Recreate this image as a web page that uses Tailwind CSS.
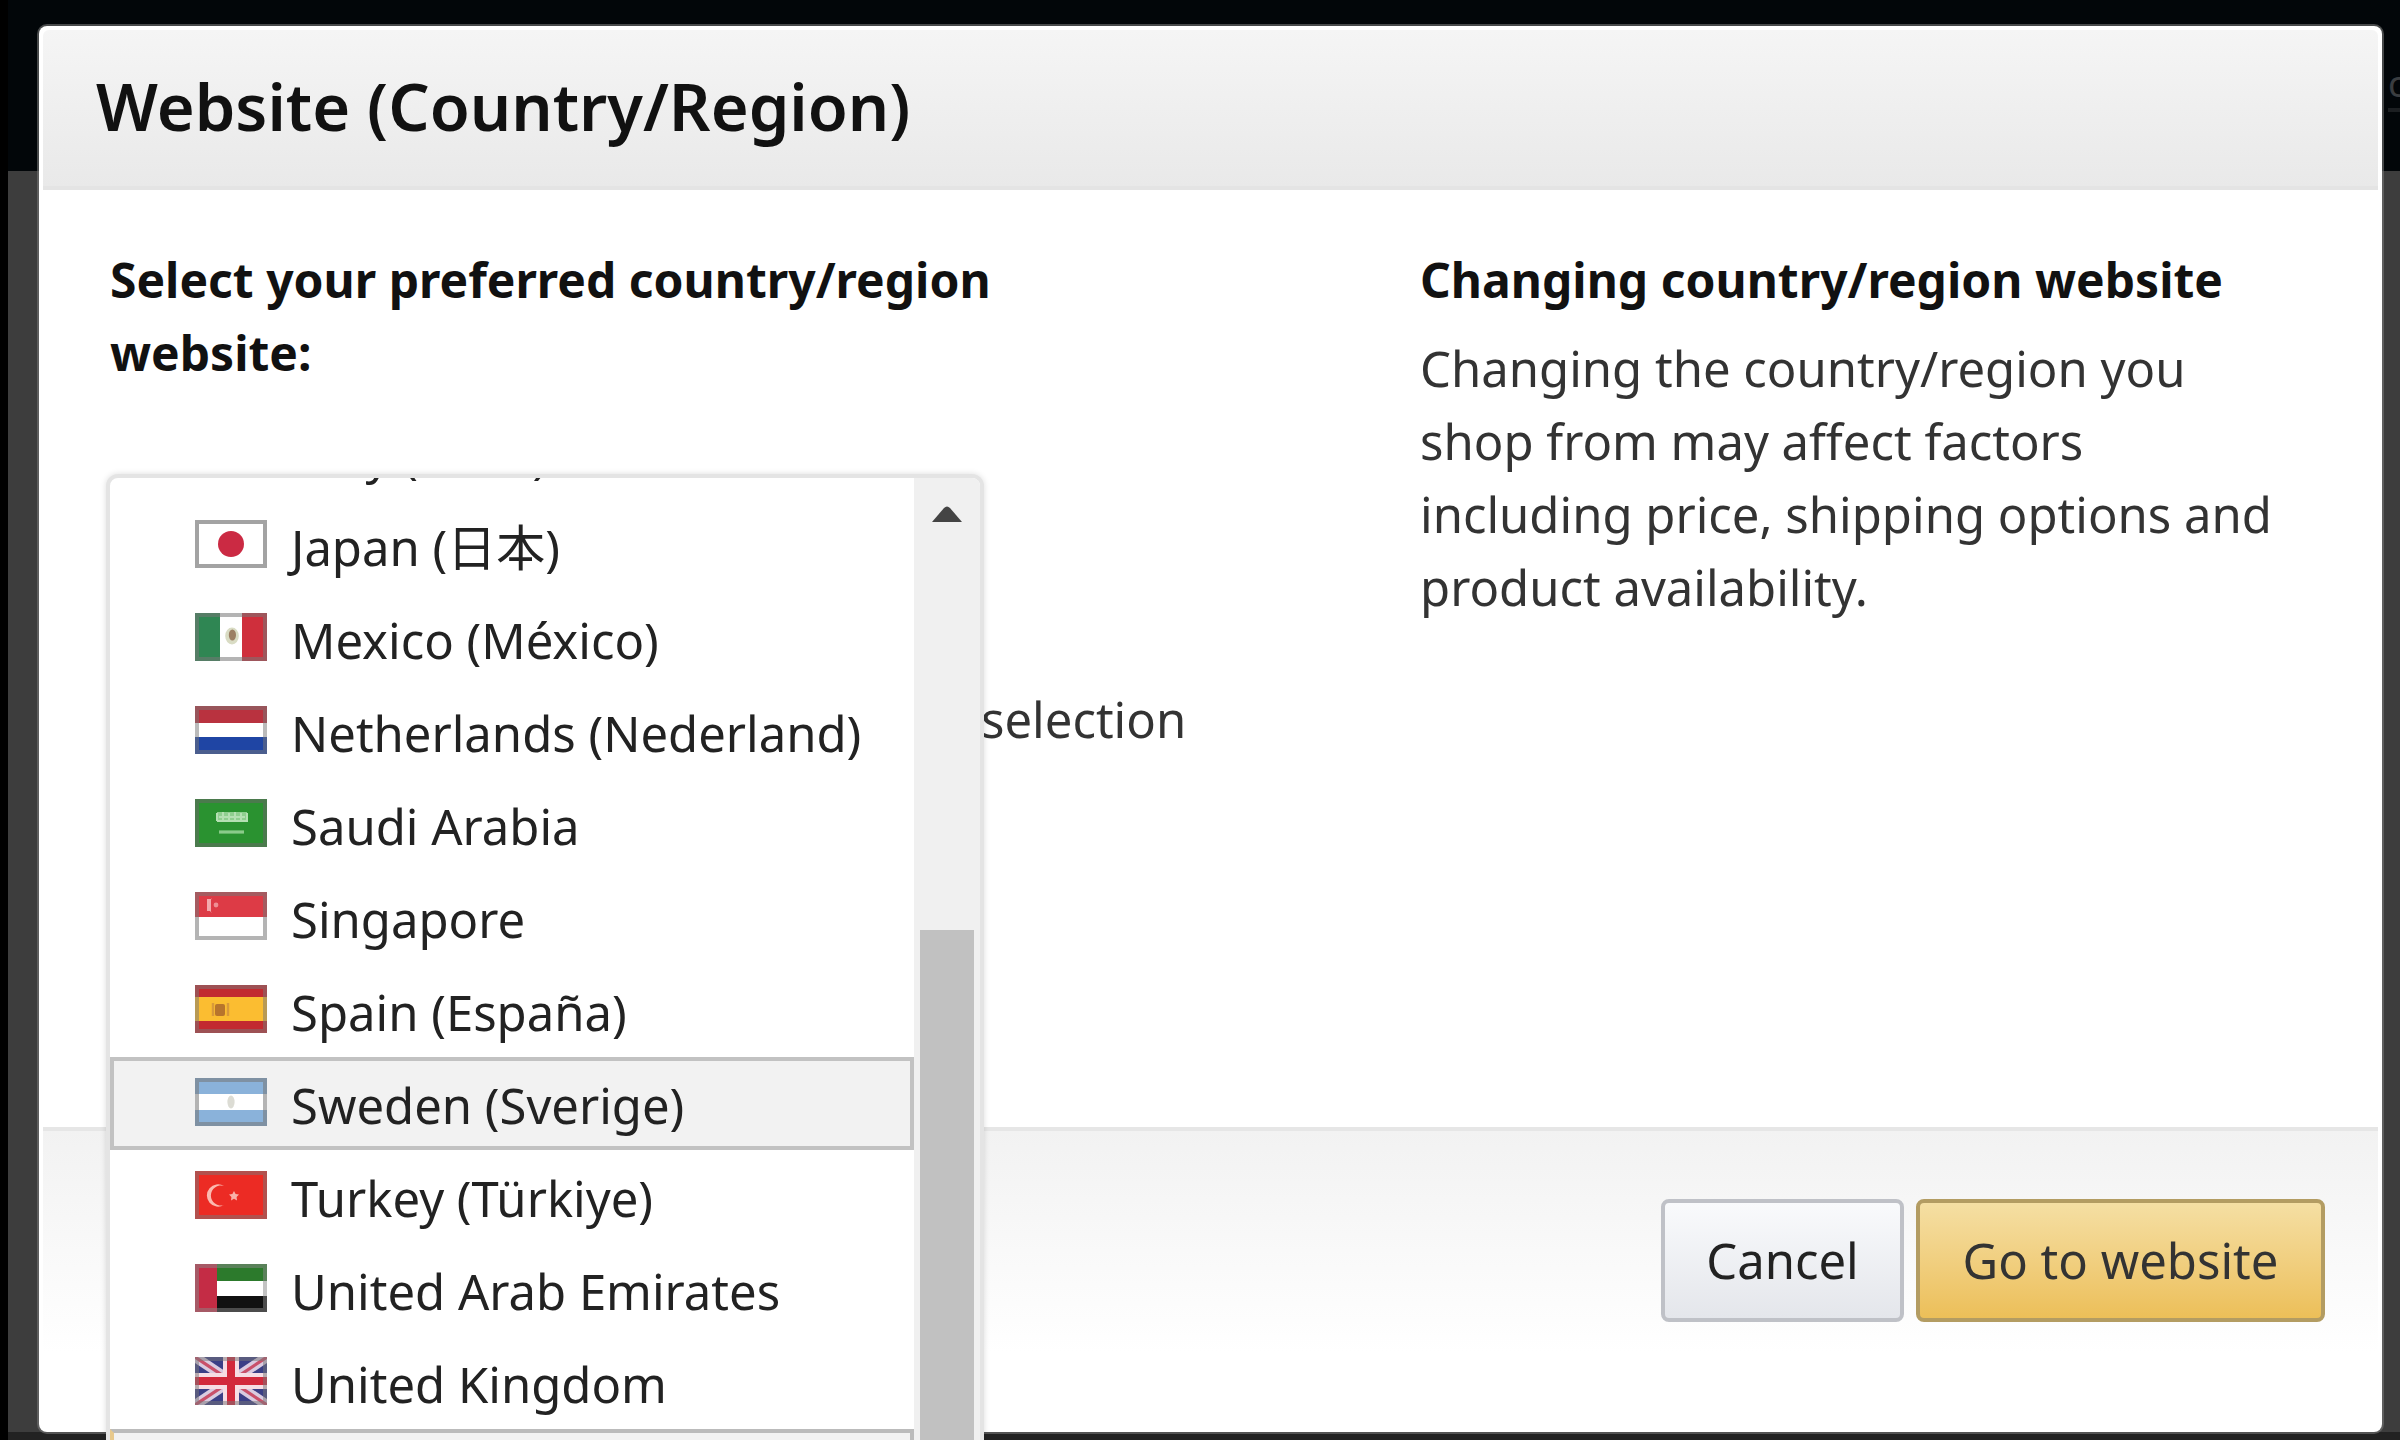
<!DOCTYPE html>
<html lang="en">

<head>
    <meta charset="UTF-8">
    <meta name="viewport" content="width=device-width, initial-scale=1.0">
    <title>Website (Country/Region)</title>
    <script src="https://cdn.jsdelivr.net/npm/@tailwindcss/browser@4"></script>
</head>

<body class="h-screen overflow-hidden bg-[#3d3d3d] font-['Noto_Sans','Noto_Sans_CJK_JP',sans-serif] text-[49px] leading-[73px] text-[#333]">

    <!-- Dimmed page behind the dialog -->
    <div class="absolute inset-0 flex flex-col justify-between border-l-8 border-black">
        <div class="flex h-[171px] justify-end overflow-hidden bg-[#020609] pt-14">
            <a href="#" class="h-14 w-3 overflow-hidden border-b-4 border-[#1c1f22] text-[36px] leading-14 text-[#3a3d40]">c</a>
        </div>
        <div class="h-2 bg-[#222]"></div>
    </div>

    <!-- Dialog -->
    <div role="dialog" aria-labelledby="dialog-title"
        class="relative mt-[26px] mr-[18px] ml-[39px] flex h-[calc(100vh-34px)] flex-col rounded-lg bg-white p-1 shadow-[0_0_0_2px_#77777799]">
        <header class="flex h-[160px] items-center rounded-t-md border-b-4 border-[#e4e4e4] bg-linear-to-b from-[#f5f5f5] to-[#e9e9e9] px-[53px] pb-1">
            <h1 id="dialog-title" class="text-[65px] leading-[84px] font-semibold text-[#111]">Website (Country/Region)</h1>
        </header>

        <main class="flex flex-1 justify-between pt-[53px] pr-[82px] pl-[67px]">
            <section class="w-[900px]">
                <h2 id="list-label" class="text-[48px] font-bold text-[#111]">Select your preferred country/region website:</h2>
                <p class="mt-[294px] pl-[871px]">selection</p>
            </section>
            <section class="w-[876px]">
                <h2 class="text-[48px] font-bold text-[#111]">Changing country/region website</h2>
                <p class="mt-4">Changing the country/region you shop from may affect factors including price, shipping options and product availability.</p>
            </section>
        </main>

        <footer class="flex h-[301px] justify-end gap-3 border-t-4 border-[#e6e6e6] bg-linear-to-b from-[#f2f2f2] to-white to-75% pt-[68px] pr-[53px]">
            <button type="button"
                class="h-[123px] w-[243px] rounded-lg border-4 border-[#bfc1c7] bg-linear-to-b from-[#f9fafc] to-[#e4e6eb] text-[#222]">Cancel</button>
            <button type="button"
                class="h-[123px] w-[409px] rounded-lg border-4 border-[#b39c62] bg-linear-to-b from-[#f5dfa3] to-[#ecbf58] text-[#333]">Go to website</button>
        </footer>

        <!-- Country list -->
        <div class="absolute top-[448px] -bottom-4 left-[67px] flex w-[878px] overflow-hidden rounded-t-xl border-4 border-[#e4e4e4] bg-white shadow-[0_0_6px_#00000022]">
            <ul role="listbox" aria-labelledby="list-label" class="-mt-[72px] flex-1 text-[#222]">
                <li role="option" class="flex h-[93px] items-center gap-6 pl-[85px]">
                    <svg class="mb-1 h-12 w-[72px]" viewBox="0 0 36 24">
                        <rect width="36" height="24" fill="#fff" />
                        <rect width="12" height="24" fill="#2f8653" />
                        <rect x="24" width="12" height="24" fill="#c8323f" />
                    </svg>
                    <span class="pt-1">Italy (Italia)</span>
                </li>
                <li role="option" class="flex h-[93px] items-center gap-6 pl-[85px]">
                    <svg class="mb-1 h-12 w-[72px]" viewBox="0 0 36 24">
                        <rect width="36" height="24" fill="#fff" />
                        <circle cx="18" cy="12" r="6.5" fill="#cb2a43" />
                        <rect x="1" y="1" width="34" height="22" fill="none" stroke="#666" stroke-opacity=".6" stroke-width="2" />
                    </svg>
                    <span class="pt-1">Japan (日本)</span>
                </li>
                <li role="option" class="flex h-[93px] items-center gap-6 pl-[85px]">
                    <svg class="mb-1 h-12 w-[72px]" viewBox="0 0 36 24">
                        <rect width="36" height="24" fill="#fff" />
                        <rect width="12.5" height="24" fill="#2f8653" />
                        <rect x="23.5" width="12.5" height="24" fill="#cf2f3c" />
                        <ellipse cx="18.5" cy="11.5" rx="3.4" ry="4.2" fill="#d9dcc4" />
                        <ellipse cx="18.7" cy="11" rx="1.8" ry="2.8" fill="#9c7f64" />
                        <rect x="1" y="1" width="34" height="22" fill="none" stroke="#777" stroke-opacity=".55" stroke-width="2" />
                    </svg>
                    <span class="pt-1">Mexico (México)</span>
                </li>
                <li role="option" class="flex h-[93px] items-center gap-6 pl-[85px]">
                    <svg class="mb-1 h-12 w-[72px]" viewBox="0 0 36 24">
                        <rect width="36" height="24" fill="#fff" />
                        <rect width="36" height="8.5" fill="#b9323f" />
                        <rect y="15.5" width="36" height="8.5" fill="#1f45a4" />
                        <rect x="1" y="1" width="34" height="22" fill="none" stroke="#777" stroke-opacity=".5" stroke-width="2" />
                    </svg>
                    <span class="pt-1">Netherlands (Nederland)</span>
                </li>
                <li role="option" class="flex h-[93px] items-center gap-6 pl-[85px]">
                    <svg class="mb-1 h-12 w-[72px]" viewBox="0 0 36 24">
                        <rect width="36" height="24" fill="#2a9230" />
                        <path d="M11 6.5h15v5h-15z" fill="#8fce8f" />
                        <path d="M11 11V7M11 11h15V7M14 11V6.5M17 11V7M20 11V6.5M23 11V7M12 9h13" fill="none" stroke="#b5e0b3" stroke-width="1" />
                        <path d="M12 16.5h12.5" stroke="#8acb8a" stroke-width="1.6" />
                        <rect x="1" y="1" width="34" height="22" fill="none" stroke="#666" stroke-opacity=".55" stroke-width="2" />
                    </svg>
                    <span class="pt-1">Saudi Arabia</span>
                </li>
                <li role="option" class="flex h-[93px] items-center gap-6 pl-[85px]">
                    <svg class="mb-1 h-12 w-[72px]" viewBox="0 0 36 24">
                        <rect width="36" height="24" fill="#fff" />
                        <rect width="36" height="12.5" fill="#dd3b46" />
                        <path d="M8.5 3a4.5 4.5 0 0 0 0 7.5a5.5 5.5 0 0 1 0-7.5z" fill="#f6b9bc" />
                        <path d="M7 3.5v6" stroke="#f3a9ad" stroke-width="2" />
                        <circle cx="10.5" cy="6.5" r="1.2" fill="#ee8f94" />
                        <rect x="1" y="1" width="34" height="22" fill="none" stroke="#777" stroke-opacity=".55" stroke-width="2" />
                    </svg>
                    <span class="pt-1">Singapore</span>
                </li>
                <li role="option" class="flex h-[93px] items-center gap-6 pl-[85px]">
                    <svg class="mb-1 h-12 w-[72px]" viewBox="0 0 36 24">
                        <rect width="36" height="24" fill="#c22a30" />
                        <rect y="6" width="36" height="12" fill="#fbbd31" />
                        <rect x="10" y="9.5" width="5" height="6" rx="1" fill="#b8752c" />
                        <path d="M9 9v6.5M16.5 9v6.5" stroke="#d99a3a" stroke-width="1.2" />
                        <rect x="1" y="1" width="34" height="22" fill="none" stroke="#777" stroke-opacity=".5" stroke-width="2" />
                    </svg>
                    <span class="pt-1">Spain (España)</span>
                </li>
                <li role="option" aria-selected="true" class="flex h-[93px] items-center gap-6 border-4 border-[#c2c2c2] bg-[#f2f2f2] pl-[81px]">
                    <svg class="mb-1 h-12 w-[72px]" viewBox="0 0 36 24">
                        <rect width="36" height="24" fill="#fff" />
                        <rect width="36" height="8" fill="#8ab2da" />
                        <rect y="16" width="36" height="8" fill="#8ab2da" />
                        <ellipse cx="18" cy="12" rx="1.8" ry="3.2" fill="#dcdcd4" />
                        <rect x="1" y="1" width="34" height="22" fill="none" stroke="#777" stroke-opacity=".55" stroke-width="2" />
                    </svg>
                    <span class="pt-1">Sweden (Sverige)</span>
                </li>
                <li role="option" class="flex h-[93px] items-center gap-6 pl-[85px]">
                    <svg class="mb-1 h-12 w-[72px]" viewBox="0 0 36 24">
                        <rect width="36" height="24" fill="#ec2b24" />
                        <path d="M14.5 7.5a5 5 0 1 0 0 9.5a5.6 5.6 0 1 1 0-9.5z" fill="#fbb9b0" />
                        <path d="M19.5 10l.8 1.5 1.7.3-1.2 1.2.2 1.7-1.5-.8-1.5.8.2-1.7-1.2-1.2 1.7-.3z" fill="#f9b0a8" />
                        <rect x="1" y="1" width="34" height="22" fill="none" stroke="#777" stroke-opacity=".5" stroke-width="2" />
                    </svg>
                    <span class="pt-1">Turkey (Türkiye)</span>
                </li>
                <li role="option" class="flex h-[93px] items-center gap-6 pl-[85px]">
                    <svg class="mb-1 h-12 w-[72px]" viewBox="0 0 36 24">
                        <rect width="36" height="24" fill="#fff" />
                        <rect width="36" height="8.5" fill="#2c7a2c" />
                        <rect y="16" width="36" height="8" fill="#111" />
                        <rect width="11" height="24" fill="#c42c45" />
                        <rect x="1" y="1" width="34" height="22" fill="none" stroke="#888" stroke-opacity=".5" stroke-width="2" />
                    </svg>
                    <span class="pt-1">United Arab Emirates</span>
                </li>
                <li role="option" class="flex h-[93px] items-center gap-6 pl-[85px]">
                    <svg class="mb-1 h-12 w-[72px]" viewBox="0 0 36 24">
                        <rect width="36" height="24" fill="#3b3f86" />
                        <path d="M0 0l36 24M36 0L0 24" stroke="#d9cbe0" stroke-width="5" />
                        <path d="M0 0l36 24M36 0L0 24" stroke="#c9506a" stroke-width="1.6" />
                        <path d="M18 0v24M0 12h36" stroke="#f6dde4" stroke-width="8" />
                        <path d="M18 0v24M0 12h36" stroke="#d2293c" stroke-width="4" />
                        <rect x="1" y="1" width="34" height="22" fill="none" stroke="#777" stroke-opacity=".5" stroke-width="2" />
                    </svg>
                    <span class="pt-1">United Kingdom</span>
                </li>
                <li role="option" class="h-[93px] border-4 border-[#bbb] border-l-[#e8c98c] bg-[#f2f2f2]"></li>
            </ul>
            <!-- Scrollbar -->
            <div class="flex w-[66px] flex-col items-center bg-[#f0f0f0] pt-[28px]">
                <svg class="h-4 w-[30px]" viewBox="0 0 30 16">
                    <path d="M0 16L12 2q3-3 6 0l12 14z" fill="#444" />
                </svg>
                <div class="mt-[408px] w-[54px] flex-1 bg-[#c1c1c1]"></div>
            </div>
        </div>
    </div>

</body>

</html>
